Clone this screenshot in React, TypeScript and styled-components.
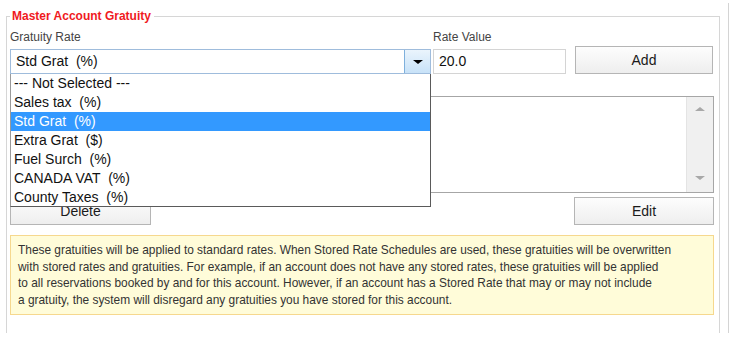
import styled, { createGlobalStyle } from 'styled-components'

const GlobalStyle = createGlobalStyle`
  html, body {
    margin: 0;
    padding: 0;
    background: #ffffff;
    overflow: hidden;
  }
  body {
    font-family: "Liberation Sans", Arial, sans-serif;
    color: #222;
  }
`

const Page = styled.div`
  width: 729px;
  height: 330px;
  margin-top: 3px;
  border-right: 1px solid #d4d4d4;
  box-sizing: border-box;
  overflow: hidden;
`

const Group = styled.fieldset`
  box-sizing: border-box;
  width: 714px;
  height: 324px;
  margin: 6px 0 0 6px;
  padding: 7px 5px 0 3px;
  border: 1px solid #d6d6d6;
  border-bottom: none;
  min-inline-size: 0;
`

const Legend = styled.legend`
  padding: 0 3px 0 2px;
  font-size: 12px;
  line-height: 14px;
  font-weight: bold;
  color: #f01a1e;
`

const TopRow = styled.div`
  display: flex;
  align-items: flex-end;
`

const Field = styled.div<{ $width: number; $gap: number }>`
  position: relative;
  display: flex;
  flex-direction: column;
  width: ${p => p.$width}px;
  margin-right: ${p => p.$gap}px;
`

const Label = styled.div`
  font-size: 12px;
  line-height: 14px;
  color: #444;
  margin-bottom: 5px;
`

const Combo = styled.div`
  box-sizing: border-box;
  height: 25px;
  display: flex;
  border: 1px solid #9fbcdc;
  background: #fff;
`

const ComboText = styled.div`
  flex: 1;
  padding-left: 5px;
  font-size: 14px;
  line-height: 23px;
  white-space: pre;
  color: #111;
`

const ComboButton = styled.div`
  width: 25px;
  border-left: 1px solid #7eb0dc;
  background: linear-gradient(#eaf4fc, #c8e2f8);
  display: flex;
  align-items: center;
  justify-content: center;
`

const Arrow = styled.div<{ $up?: boolean; $color?: string; $size?: number }>`
  width: 0;
  height: 0;
  border-left: ${p => p.$size ?? 5}px solid transparent;
  border-right: ${p => p.$size ?? 5}px solid transparent;
  ${p => (p.$up ? 'border-bottom' : 'border-top')}: ${p => (p.$size ?? 5) - 1}px solid ${p => p.$color ?? '#000'};
`

const DropList = styled.div`
  position: absolute;
  top: 100%;
  left: 0;
  z-index: 2;
  box-sizing: border-box;
  width: 421px;
  height: 133px;
  background: #fff;
  border: 1px solid #5a5a5a;
  border-left-color: #9a9a9a;
  border-top: none;
`

const DropItem = styled.div<{ $selected?: boolean }>`
  height: 19px;
  padding-left: 3px;
  font-size: 14px;
  line-height: 19px;
  white-space: pre;
  color: ${p => (p.$selected ? '#ffffff' : '#111')};
  background: ${p => (p.$selected ? '#3399ff' : 'transparent')};
`

const TextInput = styled.div`
  box-sizing: border-box;
  height: 25px;
  border: 1px solid #d4d4d4;
  padding-left: 5px;
  font-size: 14px;
  line-height: 23px;
  color: #111;
`

const Button = styled.div<{ $width: number }>`
  box-sizing: border-box;
  width: ${p => p.$width}px;
  height: 28px;
  border: 1px solid #b5b5b5;
  background: linear-gradient(#fdfdfd, #eeeeee);
  font-size: 14px;
  line-height: 26px;
  text-align: center;
  color: #1a1a1a;
`

const ListBox = styled.div`
  box-sizing: border-box;
  margin-top: 22px;
  width: 704px;
  height: 97px;
  border: 1px solid #a6a6a6;
  display: flex;
  justify-content: flex-end;
`

const ScrollBar = styled.div`
  width: 26px;
  background: #f0f0f0;
  border-left: 1px solid #e4e4e4;
  display: flex;
  flex-direction: column;
  justify-content: space-between;
  align-items: center;
  padding: 10px 0 12px;
`

const ButtonRow = styled.div`
  margin-top: 4px;
  width: 704px;
  display: flex;
  justify-content: space-between;
`

const Note = styled.div`
  box-sizing: border-box;
  margin-top: 10px;
  width: 704px;
  padding: 6px 7px;
  background: #fffcd9;
  border: 1px solid #f6d88e;
  font-size: 11.9px;
  line-height: 16.6px;
  color: #333;
  white-space: nowrap;
`

const rates = [
  '--- Not Selected ---',
  'Sales tax  (%)',
  'Std Grat  (%)',
  'Extra Grat  ($)',
  'Fuel Surch  (%)',
  'CANADA VAT  (%)',
  'County Taxes  (%)',
]

function App() {
  return (
    <>
      <GlobalStyle />
      <Page>
        <Group>
          <Legend>Master Account Gratuity</Legend>
          <TopRow>
            <Field $width={421} $gap={2}>
              <Label>Gratuity Rate</Label>
              <Combo>
                <ComboText>Std Grat  (%)</ComboText>
                <ComboButton>
                  <Arrow />
                </ComboButton>
              </Combo>
              <DropList>
                {rates.map(r => (
                  <DropItem key={r} $selected={r === 'Std Grat  (%)'}>
                    {r}
                  </DropItem>
                ))}
              </DropList>
            </Field>
            <Field $width={133} $gap={9}>
              <Label>Rate Value</Label>
              <TextInput>20.0</TextInput>
            </Field>
            <Button $width={138}>Add</Button>
          </TopRow>
          <ListBox>
            <ScrollBar>
              <Arrow $up $color="#a8a8a8" $size={5} />
              <Arrow $color="#a8a8a8" $size={5} />
            </ScrollBar>
          </ListBox>
          <ButtonRow>
            <Button $width={141}>Delete</Button>
            <Button $width={140}>Edit</Button>
          </ButtonRow>
          <Note>
            These gratuities will be applied to standard rates. When Stored Rate Schedules are used, these gratuities will be overwritten
            <br />
            with stored rates and gratuities. For example, if an account does not have any stored rates, these gratuities will be applied
            <br />
            to all reservations booked by and for this account. However, if an account has a Stored Rate that may or may not include
            <br />
            a gratuity, the system will disregard any gratuities you have stored for this account.
          </Note>
        </Group>
      </Page>
    </>
  )
}

export default App
